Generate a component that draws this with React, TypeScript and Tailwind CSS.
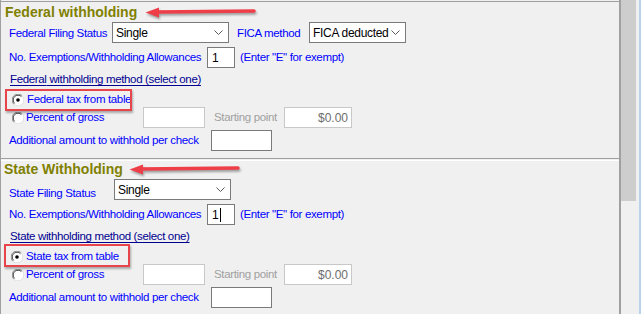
import React from 'react';

const font = { fontFamily: '"Liberation Sans", Arial, sans-serif' };

const Chevron: React.FC = () => (
  <svg width="9" height="5" viewBox="0 0 9 5">
    <path d="M0.5 0.5 L4.5 4.5 L8.5 0.5" fill="none" stroke="#5a5a5a" strokeWidth="1" />
  </svg>
);

const Radio: React.FC<{ checked?: boolean }> = ({ checked }) => (
  <svg width="12" height="12" viewBox="0 0 12 12" className="shrink-0">
    <circle cx="6" cy="6" r="5.5" fill="#ffffff" />
    <path d="M1.8 10.2 A5.5 5.5 0 0 1 10.2 1.8" fill="none" stroke="#8a8a8a" strokeWidth="1" />
    <path d="M10.2 1.8 A5.5 5.5 0 0 1 1.8 10.2" fill="none" stroke="#e0e0e0" strokeWidth="1" />
    <path d="M2.6 9.4 A4.5 4.5 0 0 1 9.4 2.6" fill="none" stroke="#404040" strokeWidth="1" />
    {checked && <circle cx="6" cy="6" r="1.8" fill="#000000" />}
  </svg>
);

const Arrow: React.FC = () => (
  <svg width="112" height="14" viewBox="0 0 112 14" className="drop-shadow-[1px_2px_1px_rgba(0,0,0,0.35)]">
    <path d="M12 7 L109 6" stroke="#ee3e48" strokeWidth="3.5" strokeLinecap="round" />
    <path d="M0.5 7.5 L14 2.5 L14 12.5 Z" fill="#ee3e48" />
  </svg>
);

const Select: React.FC<{ value: string; w: string }> = ({ value, w }) => (
  <div className={`${w} h-[21px] bg-white border border-[#7a7a7a] flex items-center justify-between pl-[3px] pr-[5px] text-[12px] tracking-[-0.3px] text-black`}>
    <span>{value}</span>
    <Chevron />
  </div>
);

const Box: React.FC<{ w: string; value?: string; light?: boolean; cursor?: boolean }> = ({ w, value, light, cursor }) => (
  <div
    className={`${w} h-[21px] bg-white border ${light ? 'border-[#c8c8c8] justify-end pr-[3px] text-[#6d6d6d]' : 'border-[#7a7a7a] pl-[4px] text-black'} flex items-center text-[12px]`}
  >
    {value}
    {cursor && <span className="inline-block w-px h-[14px] bg-black ml-px" />}
  </div>
);

const Label: React.FC<{ children: React.ReactNode; className?: string }> = ({ children, className = '' }) => (
  <div className={`text-[#0000ff] text-[11.5px] tracking-[-0.35px] whitespace-nowrap ${className}`}>{children}</div>
);

const Section: React.FC<{ kind: 'Federal' | 'State' }> = ({ kind }) => {
  const fed = kind === 'Federal';
  return (
    <div className={`pl-[8px] ${fed ? 'border-t border-b border-[#a0a0a0] pb-[7px]' : 'mt-px border-t border-white'}`}>
      {/* title */}
      <div className={`flex items-center ${fed ? 'h-[20px] -ml-[4px]' : 'h-[16px] -ml-[5px]'}`}>
        <span className="text-[14px] font-bold text-[#808000] leading-none">{fed ? 'Federal withholding' : 'State Withholding'}</span>
        <span className={fed ? 'ml-[8px]' : 'ml-[6px]'}>
          <Arrow />
        </span>
      </div>

      {/* filing status */}
      <div className={`flex items-center h-[21px] ${fed ? '' : 'mt-[2px]'}`}>
        <Label className={fed ? 'w-[103px] pt-[3px]' : 'w-[105px] pt-[8px]'}>{kind} Filing Status</Label>
        <Select value="Single" w="w-[117px]" />
        {fed && (
          <>
            <Label className="w-[80px] pl-[8px] pt-[3px]">FICA method</Label>
            <Select value="FICA deducted" w="w-[97px]" />
          </>
        )}
      </div>

      {/* exemptions */}
      <div className="flex items-center h-[21px] mt-[4px]">
        <Label className="w-[198px]">No. Exemptions/Withholding Allowances</Label>
        <Box w="w-[28px]" value="1" cursor={!fed} />
        <Label className="ml-[5px]">(Enter "E" for exempt)</Label>
      </div>

      {/* method heading */}
      <div className="flex items-center h-[25px] pb-[2px]">
        <span className="ml-px text-[11.5px] tracking-[-0.35px] text-[#000090] underline underline-offset-[2px] [text-decoration-skip-ink:none]">
          {kind} withholding method (select one)
        </span>
      </div>

      {/* from table */}
      <div className="relative flex items-center h-[14px]">
        <span
          className={`absolute border-2 border-[#e8444c] shadow-[1px_2px_2px_rgba(0,0,0,0.3)] ${fed ? 'left-[-4px] top-[-4px] w-[127px] h-[22px]' : 'left-[-5px] top-[-6px] w-[126px] h-[23px]'}`}
        />
        <span className={fed ? 'ml-[3px]' : 'ml-[2px]'}>
          <Radio checked />
        </span>
        <Label className="ml-[3px]">{kind} tax from table</Label>
      </div>

      {/* percent of gross */}
      <div className="flex items-center h-[21px]">
        <div className="flex items-center w-[134px] pl-[3px]">
          <Radio />
          <Label className="ml-[2px]">Percent of gross</Label>
        </div>
        <Box w="w-[62px]" light />
        <div className="w-[79px] pl-[9px] text-[11.5px] tracking-[-0.35px] text-[#a0a0a0]">Starting point</div>
        <Box w="w-[68px]" value="$0.00" light />
      </div>

      {/* additional */}
      <div className="flex items-center h-[21px] mt-[2px]">
        <Label className="w-[202px]">Additional amount to withhold per check</Label>
        <Box w="w-[61px]" />
      </div>
    </div>
  );
};

export default function App() {
  return (
    <div className="w-[641px] h-[314px] overflow-hidden bg-[#f0f0f0] flex" style={font}>
      <div className="w-[621px] h-full pt-px border-l border-[#a0a0a0] border-r-2 border-r-[#a0a0a0]">
        <Section kind="Federal" />
        <Section kind="State" />
      </div>
      <div className="w-[15px] h-full flex flex-col">
        <div className="h-[201px] bg-[#cdcdcd]" />
        <div className="flex-1 bg-[#f0f0f0]" />
      </div>
      <div className="w-[3px] h-full bg-[#f0f0f0]" />
      <div className="w-[2px] h-full bg-[#b9d1ea]" />
    </div>
  );
}
